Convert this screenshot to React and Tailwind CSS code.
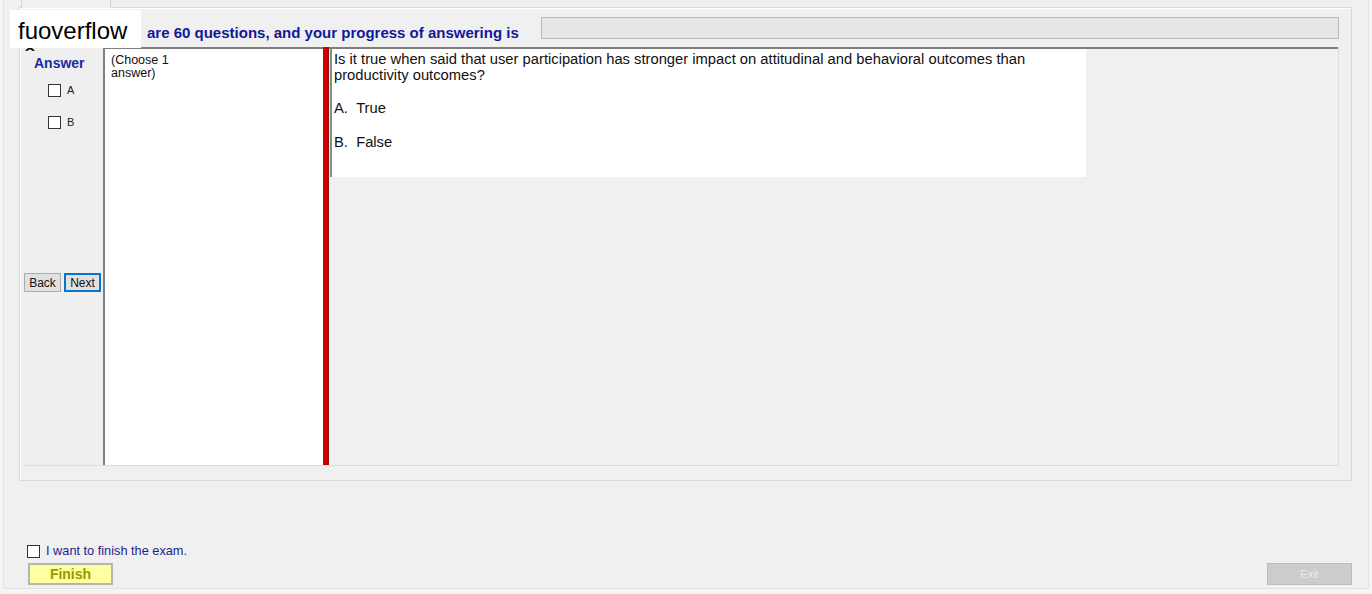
import React from 'react';

const Check = ({ className = '' }) => (
  <span className={`inline-block w-[13px] h-[13px] border border-[#333] bg-white shrink-0 ${className}`} />
);

const AnswerColumn = () => (
  <div className="w-[80px] shrink-0 bg-[#efefef] flex flex-col">
    <div className="pl-[11px] pt-[8px] text-[14px] leading-[16px] font-bold text-[#1a2aa6]">Answer</div>
    <div className="flex flex-col gap-[19px] mt-[13px] pl-[25px]">
      {['A', 'B'].map((opt) => (
        <label key={opt} className="flex items-center gap-[6px] text-[11px] leading-[13px] text-[#222]">
          <Check />
          {opt}
        </label>
      ))}
    </div>
    <div className="flex gap-[3px] mt-[144px] ml-[1px]">
      <button className="w-[37px] h-[19px] border border-[#adadad] bg-[#e1e1e1] text-[12px] leading-none text-[#111]">
        Back
      </button>
      <button className="w-[37px] h-[19px] border-2 border-[#0a74cc] bg-[#e1e1e1] text-[12px] leading-none text-[#111]">
        Next
      </button>
    </div>
  </div>
);

const QuestionBox = () => (
  <div className="ml-[1px] w-[756px] h-[128px] bg-white border-l-2 border-[#8a8a8a] pl-[2px] pt-[2px] text-[14.75px] leading-[16px] text-[#111]">
    <p>
      Is it true when said that user participation has stronger impact on attitudinal and behavioral outcomes than
      <br />
      productivity outcomes?
    </p>
    <p className="mt-[17px]">A.&nbsp;&nbsp;True</p>
    <p className="mt-[18px]">B.&nbsp;&nbsp;False</p>
  </div>
);

export default function App() {
  return (
    <div
      className="relative w-[1372px] h-[594px] overflow-hidden bg-[#f4f4f4]"
      style={{ fontFamily: '"Liberation Sans", Arial, sans-serif' }}
    >
      <div className="mx-[3px] h-[589px] bg-[#f0f0f0] border-x border-b border-[#e2e2e2] flex flex-col">
        {/* tab strip */}
        <div className="relative z-10 ml-[17px] w-[90px] h-[8px] -mb-px bg-[#f0f0f0] border-x border-[#d6d6d6]" />

        {/* main panel */}
        <div className="ml-[15px] w-[1333px] h-[474px] border border-[#d9d9d9] shadow-[inset_1px_1px_0_#ffffff] pl-[3px] pr-[12px] pb-[14px] flex flex-col">
          <div className="h-[39px] flex items-start">
            <div className="ml-[124px] mt-[16px] text-[15px] leading-[17px] font-bold text-[#10189a] whitespace-nowrap">
              are 60 questions, and your progress of answering is
            </div>
            <div className="ml-auto mt-[9px] w-[798px] h-[22px] bg-[#e6e6e6] border border-[#bcbcbc]" />
          </div>

          <div className="flex flex-1 border-r border-b border-[#dcdcdc]">
            <AnswerColumn />
            <div className="w-[220px] shrink-0 bg-white border-l-2 border-t-2 border-[#7f7f7f] pl-[6px] pt-[5px] text-[12.5px] leading-[13px] text-[#111]">
              (Choose 1
              <br />
              answer)
            </div>
            <div className="w-[6px] shrink-0 bg-[#d40000] border-r-2 border-[#8c1212]" />
            <div className="flex-1 border-t-2 border-[#7f7f7f] bg-[#f0f0f0]">
              <QuestionBox />
            </div>
          </div>
        </div>

        {/* bottom controls */}
        <label className="flex items-center gap-[6px] ml-[23px] mt-[63px] text-[12.75px] leading-[14px] text-[#1e1c8c]">
          <Check />
          I want to finish the exam.
        </label>
        <div className="flex justify-between items-center mt-[5px] pl-[24px] pr-[16px]">
          <button className="w-[85px] h-[22px] bg-[#ffffa0] border-2 border-[#b5b5b5] text-[14px] leading-none font-bold text-[#999900]">
            Finish
          </button>
          <button className="w-[85px] h-[22px] bg-[#cccccc] border border-[#bdbdbd] text-[11px] leading-none text-[#ececec]">
            Exit
          </button>
        </div>
      </div>

      {/* watermark overlay */}
      <svg className="absolute left-[25px] top-[46px]" width="10" height="5" viewBox="0 0 10 5">
        <path d="M1 5 Q5 0 9 5" fill="none" stroke="#1a1a1a" strokeWidth="2" />
      </svg>
      <div className="absolute left-[10px] top-[10px] w-[131px] h-[38px] bg-white flex items-center pl-[8px] pt-[4px] text-[24px] leading-none text-black">
        fuoverflow
      </div>
    </div>
  );
}
